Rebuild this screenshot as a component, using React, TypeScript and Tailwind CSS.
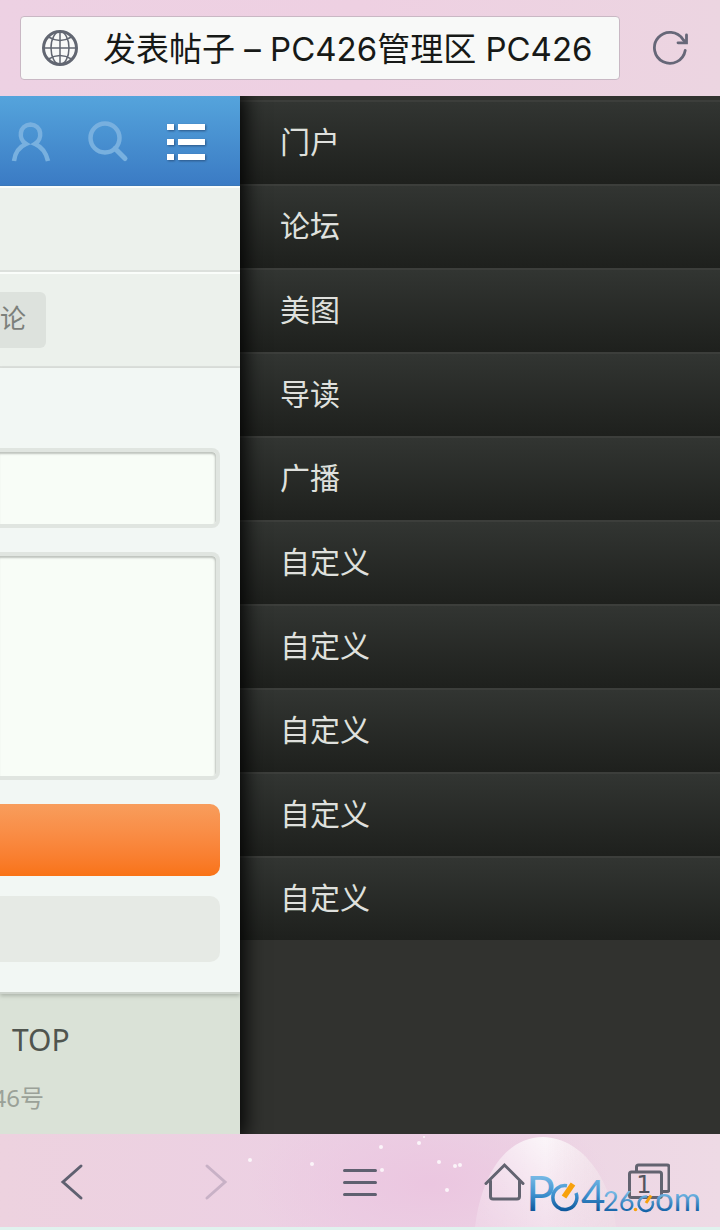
const menuItems = [
  "门户",
  "论坛",
  "美图",
  "导读",
  "广播",
  "自定义",
  "自定义",
  "自定义",
  "自定义",
  "自定义",
];

const stars = [
  { x: 250, y: 26, r: 2 },
  { x: 312, y: 30, r: 2 },
  { x: 381, y: 13, r: 2 },
  { x: 382, y: 36, r: 2 },
  { x: 419, y: 9, r: 2 },
  { x: 424, y: 3, r: 1 },
  { x: 439, y: 28, r: 2 },
  { x: 455, y: 32, r: 2 },
  { x: 460, y: 31, r: 2 },
  { x: 447, y: 56, r: 2 },
];

export default function App() {
  return (
    <div className="flex min-h-screen flex-col overflow-hidden font-['Noto_Sans','Noto_Sans_CJK_SC',sans-serif]">
      <AddressBar />
      <main className="flex flex-1 overflow-hidden bg-[#31322f]">
        <PostPage />
        <SideMenu />
      </main>
      <BottomNav />
    </div>
  );
}

/* ================= ADDRESS BAR ================= */
function AddressBar() {
  return (
    <header className="flex h-24 items-center gap-8 bg-gradient-to-r from-[#edd1e3] via-[#eed0e2] to-[#ecd5e1] pr-8 pl-5">
      <label className="flex h-16 min-w-0 flex-1 items-center gap-6 rounded border border-[#c9b8c4] bg-[#f8f9f8] pl-5">
        <GlobeIcon />
        <input
          type="text"
          aria-label="Address"
          defaultValue="发表帖子 – PC426管理区 PC426"
          className="min-w-0 flex-1 bg-transparent pt-1 font-['Inter','Noto_Sans_CJK_SC',sans-serif] text-[33px] font-[370] text-[#171917] outline-none"
        />
      </label>
      <button type="button" aria-label="Reload">
        <svg width="36" height="36" viewBox="0 0 36 36" fill="none" stroke="#666778" strokeWidth="2.800">
          <path d="M33.200 20.500A15.500 15.500 0 1 1 31 9.500L33.500 12" strokeLinecap="round" />
          <path d="M34.500 5v7.800H26" strokeLinecap="round" />
        </svg>
      </button>
    </header>
  );
}

function GlobeIcon() {
  return (
    <svg className="shrink-0" width="38" height="38" viewBox="0 0 38 38" fill="none" stroke="#626772" strokeWidth="1.500">
      <circle cx="19" cy="19" r="16.500" strokeWidth="3" />
      <ellipse cx="19" cy="19" rx="9" ry="16.500" />
      <path d="M19 2v34M2 19h34" />
      <path d="M7.500 8q11.500 7 23 0M7.500 30q11.500-7 23 0" />
    </svg>
  );
}

/* ================= POST PAGE ================= */
function PostPage() {
  return (
    <section className="z-10 flex w-1/3 flex-col overflow-hidden bg-[#dae2d7] shadow-[0_0_20px_4px_#000]">
      <div className="flex h-[90px] items-center justify-between border-b border-[#3b78b8] bg-gradient-to-b from-[#55a4dc] to-[#3b7bc4] pr-8 pl-2">
        <button type="button" aria-label="Profile">
          <svg width="44" height="44" viewBox="0 0 44 44" fill="none" stroke="#78b0df" strokeWidth="4.500">
            <path d="M6 42C7 33 11 28 18 25C10 20 11 6 22.500 5.500C34 6 35 20 27 25C34 28 38 33 40 42" />
          </svg>
        </button>
        <button type="button" aria-label="Search">
          <svg width="44" height="44" viewBox="0 0 44 44" fill="none" stroke="#78b0df">
            <circle cx="19" cy="19" r="14.500" strokeWidth="4.500" />
            <path d="M29 29.500L39 39.500" strokeWidth="5" strokeLinecap="round" />
          </svg>
        </button>
        <button type="button" aria-label="Menu">
          <svg className="drop-shadow-[1px_1px_1px_#2b5585]" width="44" height="40" viewBox="0 0 44 40" fill="#fff">
            <path d="M3 3h7v6H3zM14 3h27v6H14zM3 18h7v6H3zM14 18h27v6H14zM3 33h7v6H3zM14 33h27v6H14z" />
          </svg>
        </button>
      </div>

      <div className="h-[86px] border-t-2 border-b-2 border-t-[#fafdfa] border-b-[#dce0dc] bg-[#ecf1ec]" />
      <div className="flex h-24 items-center border-t-2 border-b-2 border-t-[#fafdfa] border-b-[#dce0dc] bg-[#ecf1ec]">
        <button type="button" className="h-14 rounded-r-md bg-[#dde2dd] pr-5 pb-1 text-[26px] text-[#7c807b]">
          论
        </button>
      </div>

      <form className="flex flex-col border-b-2 border-[#cdd3cc] bg-[#f2f7f4] pt-20 pr-5 pb-[30px] shadow-[0_2px_4px_#aeb5ab]">
        <input
          type="text"
          aria-label="Title"
          className="h-20 w-full rounded-r-lg border-4 border-l-0 border-[#e0e5e0] bg-[#f8fdf7] shadow-[inset_-1px_2px_2px_#bfc4be] outline-none"
        />
        <textarea
          aria-label="Content"
          className="mt-6 h-57 w-full resize-none rounded-r-lg border-4 border-l-0 border-[#e0e5e0] bg-[#f8fdf7] shadow-[inset_-1px_2px_2px_#bfc4be] outline-none"
        />
        <button
          type="submit"
          aria-label="Post"
          className="mt-6 h-18 w-full rounded-r-[10px] bg-gradient-to-b from-[#f89d5c] to-[#f97315]"
        />
        <button type="button" aria-label="Cancel" className="mt-5 h-[66px] w-full rounded-r-[10px] bg-[#e6eae5]" />
      </form>

      <footer className="flex flex-col items-start gap-4 pt-6">
        <a href="#top" className="pl-3 text-[30px] leading-[44px] text-[#50554f]">
          TOP
        </a>
        <p className="flex w-11 justify-end text-2xl leading-10 whitespace-nowrap text-[#9aa198]">46号</p>
      </footer>
    </section>
  );
}

/* ================= SIDE MENU ================= */
function SideMenu() {
  return (
    <nav className="flex-1 pt-1">
      <ul>
        {menuItems.map((item, i) => (
          <li key={i}>
            <a
              href="#"
              className="flex h-21 items-center border-t-2 border-[#3c3e3b] bg-gradient-to-b from-[#323532] to-[#1e201d] pb-1 pl-10 text-[30px] text-[#dfe0dd]"
            >
              {item}
            </a>
          </li>
        ))}
      </ul>
    </nav>
  );
}

/* ================= BOTTOM NAV ================= */
function BottomNav() {
  return (
    <nav className="relative h-24 border-b-3 border-[#e0f2ee] bg-gradient-to-r from-[#edd2df] via-[#ecd0e4] to-[#eedae5]">
      <svg className="absolute inset-0 h-full w-full" viewBox="0 0 720 93" preserveAspectRatio="none">
        <defs>
          <linearGradient id="planet" x1="0" y1="0" x2="1" y2="0">
            <stop offset="0" stopColor="#fff" stopOpacity="0.400" />
            <stop offset="0.500" stopColor="#fff" stopOpacity="0.800" />
            <stop offset="1" stopColor="#f5eeee" stopOpacity="0.400" />
          </linearGradient>
          <linearGradient id="planetFade" x1="0" y1="0" x2="0" y2="1">
            <stop offset="0" stopColor="#fff" />
            <stop offset="1" stopColor="#fff" stopOpacity="0.400" />
          </linearGradient>
          <mask id="planetMask">
            <rect width="720" height="93" fill="url(#planetFade)" />
          </mask>
          <radialGradient id="glow">
            <stop offset="0" stopColor="#ebc6e0" />
            <stop offset="1" stopColor="#ebc6e0" stopOpacity="0" />
          </radialGradient>
        </defs>
        <ellipse cx="430" cy="50" rx="180" ry="90" fill="url(#glow)" />
        <path d="M475 93C480 50 500 4 543 3C585 4 612 50 616 93Z" fill="url(#planet)" mask="url(#planetMask)" />
        {stars.map((s) => (
          <circle key={`${s.x}-${s.y}`} cx={s.x} cy={s.y} r={s.r} fill="#fff" fillOpacity="0.800" />
        ))}
      </svg>

      <div className="relative grid h-24 grid-cols-5 place-items-center">
        <button type="button" aria-label="Back">
          <svg width="40" height="40" viewBox="0 0 40 40" fill="none" stroke="#5f6070" strokeWidth="3" strokeLinecap="round">
            <path d="M29 4L11 20L29 36" />
          </svg>
        </button>
        <button type="button" aria-label="Forward">
          <svg width="40" height="40" viewBox="0 0 40 40" fill="none" stroke="#c8b1c6" strokeWidth="3" strokeLinecap="round">
            <path d="M11 4L29 20L11 36" />
          </svg>
        </button>
        <button type="button" aria-label="Options">
          <svg width="40" height="40" viewBox="0 0 40 40" stroke="#5f6070" strokeWidth="3" strokeLinecap="round">
            <path d="M4.500 8.500h31M4.500 20.500h31M4.500 32.500h31" />
          </svg>
        </button>
        <button type="button" aria-label="Home">
          <svg width="44" height="44" viewBox="0 0 44 44" fill="none" stroke="#626370" strokeWidth="3" strokeLinecap="round">
            <path d="M4 23.500L22.500 5L41 23.500" />
            <path d="M8.500 21v15.500q0 2.500 2.500 2.500h24q2.500 0 2.500-2.500V21" />
          </svg>
        </button>
        <button type="button" aria-label="Tabs">
          <svg width="44" height="44" viewBox="0 0 44 44" fill="none" stroke="#626370" strokeWidth="3">
            <path d="M10.500 11.500V7q0-2 2-2H41q2 0 2 2v22.500q0 2-2 2h-4.500" />
            <rect x="3.500" y="12" width="32" height="25.500" rx="2" />
            <text
              x="18"
              y="33"
              textAnchor="middle"
              fill="#53545f"
              stroke="none"
              className="font-['DejaVu_Sans',sans-serif] text-[24px]"
            >
              1
            </text>
          </svg>
        </button>
      </div>

      <SiteLogo />
    </nav>
  );
}

function SiteLogo() {
  return (
    <svg
      className="pointer-events-none absolute right-0 bottom-0 font-['Lato',sans-serif]"
      width="200"
      height="68"
      viewBox="-10 -14 200 68"
      fill="none"
    >
      <defs>
        <linearGradient id="logoBlue" gradientUnits="userSpaceOnUse" x1="0" y1="4" x2="0" y2="40">
          <stop offset="0" stopColor="#74b7e4" />
          <stop offset="0.500" stopColor="#3d8fcd" />
          <stop offset="1" stopColor="#074f94" />
        </linearGradient>
        <linearGradient id="logoSmall" gradientUnits="userSpaceOnUse" x1="0" y1="20" x2="0" y2="40">
          <stop offset="0" stopColor="#74b7e4" />
          <stop offset="1" stopColor="#0b5ba2" />
        </linearGradient>
      </defs>
      <text x="-4" y="38" fill="url(#logoBlue)" className="text-[48px]">P</text>
      <path d="M37 12.700A12 12 0 1 0 46 20" stroke="url(#logoBlue)" strokeWidth="3.500" />
      <path d="M43 11L34 24" stroke="#f7a10c" strokeWidth="5.500" />
      <text x="51" y="38" fill="url(#logoBlue)" className="text-[42px]">4</text>
      <text x="73" y="38" fill="url(#logoSmall)" className="text-[27px]">26</text>
      <circle cx="105.500" cy="36.500" r="1.800" fill="#f7a10c" />
      <path d="M117 23.600A7.200 7.200 0 1 0 122.500 28" stroke="url(#logoSmall)" strokeWidth="2.500" />
      <path d="M121 22.500L116 30" stroke="#f7a10c" strokeWidth="3" />
      <text x="125" y="38" fill="url(#logoSmall)" className="text-[33px]">om</text>
    </svg>
  );
}
